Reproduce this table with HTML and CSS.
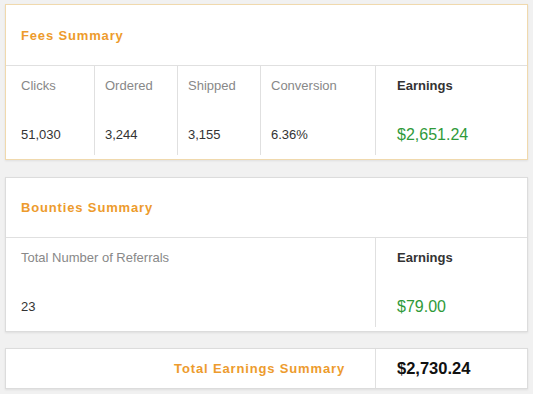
FILE: index.html
```html
<!DOCTYPE html>
<html>
<head>
<meta charset="utf-8">
<link rel="stylesheet" href="styles.css">
</head>
<body>
<div class="page">
  <section class="card card-fees">
    <header class="card-head"><h2 class="title">Fees Summary</h2></header>
    <div class="stats stats-fees">
      <div class="cell first"><div class="label">Clicks</div><div class="value">51,030</div></div>
      <div class="cell"><div class="label">Ordered</div><div class="value">3,244</div></div>
      <div class="cell"><div class="label">Shipped</div><div class="value">3,155</div></div>
      <div class="cell"><div class="label">Conversion</div><div class="value">6.36%</div></div>
      <div class="cell earn"><div class="label strong">Earnings</div><div class="value money">$2,651.24</div></div>
    </div>
  </section>

  <section class="card card-bounties">
    <header class="card-head"><h2 class="title">Bounties Summary</h2></header>
    <div class="stats stats-bounties">
      <div class="cell first"><div class="label">Total Number of Referrals</div><div class="value">23</div></div>
      <div class="cell earn"><div class="label strong">Earnings</div><div class="value money">$79.00</div></div>
    </div>
  </section>

  <section class="card total">
    <div class="total-label">Total Earnings Summary</div>
    <div class="total-value">$2,730.24</div>
  </section>
</div>
</body>
</html>
```

FILE: styles.css
```css
* { box-sizing: border-box; }
html, body { margin: 0; padding: 0; }
body {
  background: #f1f1f1;
  font-family: "Liberation Sans", Arial, sans-serif;
  color: #333;
  width: 533px;
  height: 394px;
  overflow: hidden;
}
.page {
  padding: 4px 5px 0 5px;
  display: flex;
  flex-direction: column;
}
.card {
  background: #fff;
  border: 1px solid #dcdcdc;
  box-shadow: 0 1px 2px rgba(0,0,0,0.08);
  margin-bottom: 16px;
}
.card-fees {
  border-color: #f0d9ad;
  margin-bottom: 17px;
}
.card-head {
  height: 61px;
  border-bottom: 1px solid #e0e0e0;
  display: flex;
  align-items: center;
  padding-left: 15px;
  padding-top: 1px;
}
.card-bounties .card-head {
  height: 60px;
  padding-top: 0;
}
.title {
  margin: 0;
  font-size: 13px;
  font-weight: bold;
  letter-spacing: 0.85px;
  color: #ed9b2d;
}
.stats {
  display: grid;
  padding-bottom: 4px;
}
.stats-fees { grid-template-columns: 88px 83px 83px 115px 1fr; }
.stats-bounties { grid-template-columns: 369px 1fr; }
.cell {
  border-left: 1px solid #e0e0e0;
  padding: 12px 0 10px 10px;
  height: 89px;
}
.cell.first {
  border-left: none;
  padding-left: 15px;
}
.cell.earn { padding-left: 21px; }
.label {
  font-size: 13px;
  line-height: 16px;
  color: #888;
}
.label.strong {
  color: #333;
  font-weight: bold;
}
.value {
  margin-top: 31px;
  font-size: 13px;
  line-height: 20px;
  color: #333;
}
.value.money {
  font-size: 16px;
  color: #2f9a3a;
}
.total {
  display: grid;
  grid-template-columns: 369px 1fr;
  height: 41px;
}
.total-label {
  text-align: right;
  padding-right: 30px;
  font-size: 13px;
  font-weight: bold;
  letter-spacing: 0.85px;
  color: #ed9b2d;
  line-height: 39px;
}
.total-value {
  border-left: 1px solid #e0e0e0;
  padding-left: 21px;
  font-size: 16.5px;
  font-weight: bold;
  color: #111;
  line-height: 39px;
}
```
